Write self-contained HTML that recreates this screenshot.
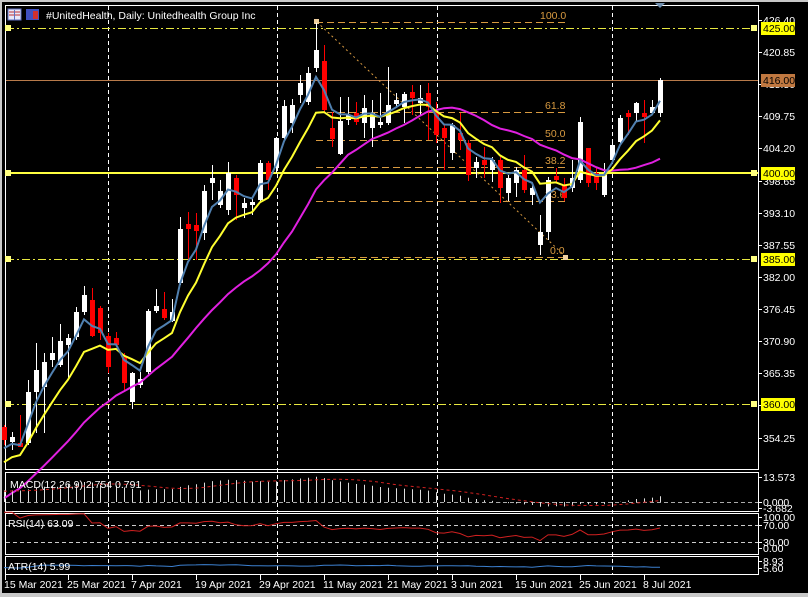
<!DOCTYPE html>
<html><head><meta charset="utf-8"><style>
html,body{margin:0;padding:0;background:#c8c8c8;width:808px;height:597px;overflow:hidden}
#c{position:absolute;left:2px;top:2px;width:806px;height:591px;background:#000}
svg{position:absolute;left:0;top:0}
text{font-family:"Liberation Sans",sans-serif;font-size:10.5px}
</style></head><body>
<div id="c"></div>
<svg id="s" width="808" height="597" xmlns="http://www.w3.org/2000/svg"></svg>
<script>
var C=[
[427,440,425,445,'r'],[437,442,432,450,'w'],[443,447,415,447,'r'],[392,443,380,445,'w'],[370,392,343,433,'w'],[362,387,353,433,'w'],[353,360,337,367,'w'],[341,365,324,367,'w'],[338,345,334,378,'w'],[312,337,307,340,'w'],
[295,312,286,315,'w'],[300,336,288,337,'r'],[308,333,306,340,'r'],[336,367,333,373,'r'],[338,345,332,347,'r'],[357,383,353,390,'r'],[373,402,372,409,'w'],[379,385,372,388,'w'],[311,372,309,374,'w'],[306,311,289,313,'w'],
[309,318,292,320,'r'],[312,321,299,322,'w'],[229,283,217,285,'w'],[224,229,212,260,'r'],[225,231,213,260,'r'],[191,233,185,240,'w'],[178,183,165,200,'w'],[191,205,180,208,'w'],[173,210,162,215,'w'],[178,195,175,220,'r'],
[203,208,198,218,'w'],[202,205,198,215,'w'],[163,200,160,203,'w'],[163,180,161,190,'r'],[138,168,137,173,'w'],[106,138,100,140,'w'],[105,123,99,133,'w'],[83,95,75,103,'w'],[73,102,67,105,'w'],[50,68,23,72,'w'],
[61,110,45,113,'r'],[128,139,112,147,'r'],[121,154,97,155,'w'],[115,120,97,125,'w'],[113,122,102,125,'r'],[108,123,95,138,'w'],[113,128,100,147,'w'],[122,125,93,128,'w'],[105,123,67,125,'w'],[100,104,93,108,'w'],
[94,107,92,123,'w'],[92,98,85,115,'r'],[98,103,85,115,'w'],[93,107,83,140,'r'],[112,135,102,143,'r'],[128,138,125,170,'r'],[125,153,123,160,'w'],[133,140,113,150,'r'],[143,175,140,181,'r'],[162,168,157,178,'w'],
[160,165,147,178,'r'],[160,170,157,182,'w'],[160,188,157,203,'r'],[178,193,175,201,'w'],[170,183,167,197,'w'],[170,190,155,193,'r'],[188,195,185,205,'w'],[232,245,215,255,'w'],[180,232,177,240,'w'],[176,180,168,183,'r'],
[185,198,178,201,'r'],[178,188,160,192,'w'],[122,180,117,183,'w'],[148,183,148,187,'r'],[173,183,167,190,'r'],[175,195,163,197,'w'],[145,160,143,163,'w'],[118,142,115,143,'w'],[113,117,110,135,'r'],[103,113,102,122,'w'],
[113,117,100,143,'r'],[107,113,100,115,'w'],[80,113,78,117,'w']];
function P(y){return 426.4-(y-20)/5.788}
function Y(p){return 20+(426.4-p)*5.788}
var S='';
function add(s){S+=s}
[108,277,437,612].forEach(function(x){add('<line x1="'+x+'.5" y1="6" x2="'+x+'.5" y2="575" stroke="#fff" stroke-dasharray="4,3"/>')});
add('<rect x="5.5" y="5.5" width="753" height="464" fill="none" stroke="#fff"/>');
add('<rect x="5.5" y="472.5" width="753" height="39" fill="none" stroke="#fff"/>');
add('<rect x="5.5" y="513.5" width="753" height="41" fill="none" stroke="#fff"/>');
add('<rect x="5.5" y="556.5" width="753" height="18" fill="none" stroke="#fff"/>');
add('<line x1="6" y1="80.5" x2="758" y2="80.5" stroke="#b87a4a"/>');
add('<line x1="6" y1="173" x2="758" y2="173" stroke="#ffff40" stroke-width="2"/>');
[28,259,404].forEach(function(y){add('<line x1="6" y1="'+y+'.5" x2="758" y2="'+y+'.5" stroke="#e8e840" stroke-dasharray="8,3,2,3"/>')});
[28,173,259,404].forEach(function(y){add('<rect x="5" y="'+(y-3)+'" width="6" height="6" fill="#ffff80"/><rect x="751" y="'+(y-3)+'" width="6" height="6" fill="#ffff80"/>')});
var fl=[[22,'100.0',540],[112,'61.8',545],[140,'50.0',545],[167,'38.2',545],[201,'23.6',545],[257,'0.0',550]];
fl.forEach(function(f){add('<line x1="316" y1="'+f[0]+'.5" x2="566" y2="'+f[0]+'.5" stroke="#d89a40" stroke-dasharray="7,4"/><text x="'+f[2]+'" y="'+(f[0]-3)+'" fill="#d89a40" font-size="10">'+f[1]+'</text>')});
add('<line x1="317" y1="22" x2="566" y2="257" stroke="#d89a40" stroke-dasharray="2,3"/>');
add('<rect x="314" y="19" width="5" height="5" fill="#f0d0a0"/><rect x="563" y="255" width="5" height="5" fill="#f0d0a0"/>');
var cl=[],hi=[],lo=[];
for(var k=0;k<30;k++){var p=325+k*(P(440)-325)/30;cl.push(p);hi.push(p+3);lo.push(p-3);}
C.forEach(function(c){var close=c[4]=='w'?c[0]:c[1];cl.push(P(close));hi.push(P(c[2]));lo.push(P(c[3]));});
function ema(a,n){var k=2/(n+1),r=[a[0]];for(var i=1;i<a.length;i++)r.push(a[i]*k+r[i-1]*(1-k));return r}
function sma(a,n){var r=[];for(var i=0;i<a.length;i++){var s=0,m=0;for(var j=Math.max(0,i-n+1);j<=i;j++){s+=a[j];m++}r.push(s/m)}return r}
function line(arr,fn,col,w,dash){var d='';for(var i=30;i<arr.length;i++){var x=4+8*(i-30);d+=(i==30?'M':'L')+x+','+fn(arr[i]).toFixed(1)}add('<path d="'+d+'" fill="none" stroke="'+col+'" stroke-width="'+w+'"'+(dash?' stroke-dasharray="'+dash+'"':'')+'/>')}
C.forEach(function(c,i){var x=4+8*i;var col=c[4]=='w'?'#fff':'#ff0000';
add('<line x1="'+(x+.5)+'" y1="'+c[2]+'" x2="'+(x+.5)+'" y2="'+c[3]+'" stroke="'+col+'"/>');
add('<rect x="'+(x-2)+'" y="'+c[0]+'" width="5" height="'+Math.max(1,c[1]-c[0])+'" fill="'+col+'"/>')});
line(sma(cl,22),Y,'#e020e0',2);
line(ema(cl,9),Y,'#ffff30',2);
line(ema(cl,4),Y,'#5080b0',2);
var e12=ema(cl,12),e26=ema(cl,26),m=e12.map(function(v,i){return v-e26[i]});
var sig=sma(m,9);
function MY(v){return 502-v*2.1}
add('<line x1="6" y1="502.5" x2="758" y2="502.5" stroke="#aaa" stroke-dasharray="4,3"/>');
for(var i=30;i<m.length;i++){var x=4+8*(i-30)+.5;add('<line x1="'+x+'" y1="502" x2="'+x+'" y2="'+Math.max(474,MY(m[i])).toFixed(1)+'" stroke="#ddd"/>')}
line(sig,function(v){return Math.max(474,MY(v))},'#d02020',1,'3,3');
var g=0,l=0,rsi=[];for(var i=1;i<cl.length;i++){var d=cl[i]-cl[i-1];g=(g*13+Math.max(d,0))/14;l=(l*13+Math.max(-d,0))/14;rsi[i]=100-100/(1+g/(l||1e-6))}rsi[0]=50;
add('<line x1="6" y1="525.5" x2="758" y2="525.5" stroke="#ccc" stroke-dasharray="4,3"/><line x1="6" y1="542.5" x2="758" y2="542.5" stroke="#ccc" stroke-dasharray="4,3"/>');
line(rsi,function(v){return 554.75-0.425*v},'#d02020',1);
var tr=[6];for(var i=1;i<cl.length;i++)tr.push(Math.max(hi[i]-lo[i],Math.abs(hi[i]-cl[i-1]),Math.abs(lo[i]-cl[i-1])));
var at=[6];for(var i=1;i<tr.length;i++)at.push((at[i-1]*13+tr[i])/14);
line(at,function(v){return Math.min(573,Math.max(558,568-(v-5.6)*1.8))},'#3c80d0',1);
add('<text x="10" y="488" fill="#fff">MACD(12,26,9) 2.754 0.791</text>');
add('<text x="8" y="527" fill="#fff">RSI(14) 63.09</text>');
add('<text x="8" y="570" fill="#fff">ATR(14) 5.99</text>');
var ax=[[426.4,'426.40'],[420.85,'420.85'],[415.3,'415.30'],[409.75,'409.75'],[404.2,'404.20'],[398.65,'398.65'],[393.1,'393.10'],[387.55,'387.55'],[382,'382.00'],[376.45,'376.45'],[370.9,'370.90'],[365.35,'365.35'],[359.8,'359.80'],[354.25,'354.25']];
ax.forEach(function(a){var y=Y(a[0]);add('<line x1="758" y1="'+y.toFixed(0)+'.5" x2="762" y2="'+y.toFixed(0)+'.5" stroke="#fff"/><text x="763" y="'+(y+4).toFixed(0)+'" fill="#fff">'+a[1]+'</text>')});
[[28,'425.00','#ffff00'],[80,'416.00','#c07840'],[173,'400.00','#ffff00'],[259,'385.00','#ffff00'],[404,'360.00','#ffff00']].forEach(function(b){add('<rect x="761" y="'+(b[0]-6)+'" width="34" height="13" fill="'+b[2]+'"/><text x="763" y="'+(b[0]+4)+'" fill="#000">'+b[1]+'</text>')});
[[477,'13.573'],[502,'0.000'],[508,'-3.682'],[517,'100.00'],[525,'70.00'],[542,'30.00'],[548,'0.00'],[561,'8.93'],[568,'5.60']].forEach(function(a){add('<line x1="758" y1="'+a[0]+'.5" x2="762" y2="'+a[0]+'.5" stroke="#fff"/><text x="763" y="'+(a[0]+4)+'" fill="#fff">'+a[1]+'</text>')});
[[5,'15 Mar 2021'],[68,'25 Mar 2021'],[132,'7 Apr 2021'],[196,'19 Apr 2021'],[260,'29 Apr 2021'],[324,'11 May 2021'],[388,'21 May 2021'],[452,'3 Jun 2021'],[516,'15 Jun 2021'],[580,'25 Jun 2021'],[644,'8 Jul 2021']].forEach(function(d){add('<line x1="'+d[0]+'.5" y1="575" x2="'+d[0]+'.5" y2="580" stroke="#fff"/><text x="'+(d[0]-1)+'" y="588" fill="#fff">'+d[1]+'</text>')});
add('<rect x="8" y="9" width="13" height="11" fill="#e8e8f8" stroke="#6070c0"/><line x1="9" y1="12" x2="20" y2="12" stroke="#c03030"/><line x1="9" y1="15" x2="20" y2="15" stroke="#c03030"/><line x1="14.5" y1="10" x2="14.5" y2="20" stroke="#6070c0"/>');
add('<rect x="26" y="9" width="13" height="11" fill="#4050c0"/><rect x="33" y="11" width="5" height="8" fill="#d03030"/>');
add('<text x="46" y="19" fill="#fff" font-size="11">#UnitedHealth, Daily:  Unitedhealth Group Inc</text>');
add('<path d="M655,3 L665,3 L660,8 Z" fill="#7090b0"/>');
document.getElementById('s').innerHTML=S;
</script>
</body></html>
